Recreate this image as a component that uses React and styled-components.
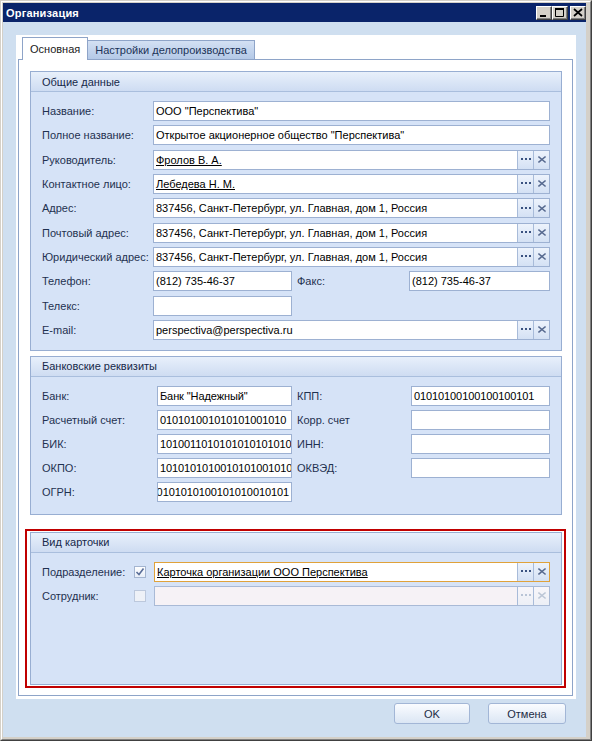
import React from 'react';
import styled, { createGlobalStyle, css } from 'styled-components';

const GlobalStyle = createGlobalStyle`
  html, body { margin: 0; padding: 0; overflow: hidden; background: #d4d0c8; }
  body { font-family: "Liberation Sans", Arial, sans-serif; font-size: 11px; }
  * { box-sizing: border-box; }
`;

const Window = styled.div`
  width: 592px;
  height: 741px;
  border: 1px solid;
  border-color: #d4d0c8 #404040 #404040 #d4d0c8;
  background: #d4d0c8;
`;

const WindowInner = styled.div`
  height: 100%;
  border: 1px solid;
  border-color: #ffffff #808080 #808080 #ffffff;
  padding: 1px 4px 2px 1px;
  display: flex;
  flex-direction: column;
`;

const TitleBar = styled.div`
  height: 19px;
  background: #0a246a;
  display: flex;
  align-items: center;
  padding: 0 0 0 3px;
`;

const Title = styled.div`
  flex: 1;
  color: #ffffff;
  font-weight: bold;
  font-size: 11px;
  letter-spacing: 0.2px;
`;

const TitleButtons = styled.div`
  display: flex;
  align-items: center;
`;

const TitleButton = styled.div`
  width: 16px;
  height: 14px;
  margin-left: ${p => (p.$gap ? '2px' : '0')};
  background: #d4d0c8;
  border: 1px solid;
  border-color: #ffffff #404040 #404040 #ffffff;
  box-shadow: inset -1px -1px 0 #808080;
  display: flex;
  align-items: flex-start;
  justify-content: flex-start;
  svg { display: block; }
`;

const Content = styled.div`
  flex: 1;
  background: #cfdff0;
  padding: 13px 10px 13px 13px;
  display: flex;
  flex-direction: column;
`;

const TabControl = styled.div`
  height: 664px;
  background: #ffffff;
  padding: 2px 3px 3px 2px;
  display: flex;
  flex-direction: column;
`;

const TabStrip = styled.div`
  height: 23px;
  display: flex;
  align-items: flex-end;
  padding-left: 4px;
  margin-bottom: -1px;
  position: relative;
  z-index: 1;
`;

const Tab = styled.div`
  display: flex;
  align-items: center;
  padding: 0 7px;
  border: 1px solid #8ea4c8;
  border-bottom: none;
  white-space: nowrap;
  ${p =>
    p.$active
      ? css`
          height: 23px;
          background: #ffffff;
          color: #1a1a1a;
        `
      : css`
          height: 19px;
          margin-bottom: 1px;
          border-left: none;
          background: linear-gradient(#d3e0f3, #b4c9e7);
          color: #1c3358;
        `}
`;

const Page = styled.div`
  flex: 1;
  border: 1px solid #8ea4c8;
  background: #ffffff;
  padding: 11px 10px 7px 11px;
  display: flex;
  flex-direction: column;
`;

const Group = styled.div`
  border: 1px solid #98aed2;
  background: #d6e3f7;
  display: flex;
  flex-direction: column;
  margin-top: ${p => p.$mt || 0}px;
  ${p => p.$grow && css`flex: 1;`}
`;

const GroupHeader = styled.div`
  height: 20px;
  border-bottom: 1px solid #a9bedd;
  background: linear-gradient(#e8f0fb, #cedcf2);
  padding-left: 11px;
  display: flex;
  align-items: center;
  color: #17294a;
`;

const GroupBody = styled.div`
  display: flex;
  flex-direction: column;
  padding: 9px 11px ${p => p.$pb}px 11px;
  gap: ${p => p.$gap}px;
`;

const Row = styled.div`
  height: 20px;
  display: flex;
  align-items: center;
`;

const Label = styled.div`
  width: ${p => p.$w}px;
  flex: none;
  padding-left: ${p => p.$pl || 0}px;
  color: #1f3150;
  white-space: nowrap;
`;

const Field = styled.div`
  height: 20px;
  display: flex;
  align-items: stretch;
  background: #ffffff;
  border: 1px solid #9db1d2;
  overflow: hidden;
  ${p => (p.$w ? css`width: ${p.$w}px; flex: none;` : css`flex: 1; min-width: 0;`)}
  ${p => p.$focus && css`border-color: #e0a23a;`}
  ${p => p.$disabled && css`background: #f6f2f6; border-color: #a9bad6;`}
`;

const FieldText = styled.div`
  flex: 1;
  min-width: 0;
  display: flex;
  align-items: center;
  justify-content: ${p => (p.$end ? 'flex-end' : 'flex-start')};
  padding: 0 2px;
  overflow: hidden;
  white-space: nowrap;
  color: #000000;
  ${p => p.$link && css`text-decoration: underline;`}
  ${p => p.$digits && css`letter-spacing: -0.1px;`}
`;

const EditButton = styled.div`
  width: 16px;
  flex: none;
  border-left: 1px solid #a8bbd9;
  background: ${p => (p.$disabled ? 'linear-gradient(#f8f6fa, #eceff6)' : 'linear-gradient(#edf3fc, #d4e1f4)')};
  display: flex;
  align-items: center;
  justify-content: center;
  svg { display: block; }
`;

const Check = styled.div`
  width: 12px;
  height: 12px;
  flex: none;
  margin-right: 8px;
  border: 1px solid ${p => (p.$disabled ? '#bcc8dc' : '#a4b5d0')};
  background: ${p => (p.$disabled ? '#eef1f7' : 'linear-gradient(#ffffff, #e8eef8)')};
  display: flex;
  align-items: center;
  justify-content: center;
  svg { display: block; }
`;

const Highlight = styled.div`
  flex: 1;
  margin: 14px -4px 0 -5px;
  border: 2px solid #c00000;
  padding: 1px 2px 1px 3px;
  display: flex;
  flex-direction: column;
`;

const Footer = styled.div`
  height: 21px;
  margin-top: 4px;
  padding-right: 10px;
  display: flex;
  justify-content: flex-end;
  gap: 18px;
`;

const DialogButton = styled.div`
  width: ${p => p.$w}px;
  height: 21px;
  border: 1px solid #a2b6d6;
  border-radius: 3px;
  background: linear-gradient(#fafcff, #dbe6f4);
  color: #1c2b44;
  display: flex;
  align-items: center;
  justify-content: center;
`;

const Dots = ({ disabled }) => (
  <svg width="10" height="3" viewBox="0 0 10 3">
    <g fill={disabled ? '#b9c4d6' : '#3a5280'}>
      <rect x="0" y="0" width="2" height="2" />
      <rect x="4" y="0" width="2" height="2" />
      <rect x="8" y="0" width="2" height="2" />
    </g>
  </svg>
);

const Cross = ({ disabled }) => (
  <svg width="8" height="7" viewBox="0 0 8 7">
    <path d="M1 1 L7 6 M7 1 L1 6" stroke={disabled ? '#bcc6d6' : '#56698f'} strokeWidth="1.5" strokeLinecap="square" fill="none" />
  </svg>
);

const LookupButtons = ({ disabled }) => (
  <>
    <EditButton $disabled={disabled}><Dots disabled={disabled} /></EditButton>
    <EditButton $disabled={disabled}><Cross disabled={disabled} /></EditButton>
  </>
);

const TextRow = ({ label, value, link, lookup }) => (
  <Row>
    <Label $w={111}>{label}</Label>
    <Field>
      <FieldText $link={link}>{value}</FieldText>
      {lookup && <LookupButtons />}
    </Field>
  </Row>
);

const BankRow = ({ label, value, end, label2, value2 }) => (
  <Row>
    <Label $w={115}>{label}</Label>
    <Field $w={135}>
      <FieldText $digits $end={end}>{value}</FieldText>
    </Field>
    {label2 !== undefined && (
      <>
        <Label $w={119} $pl={5}>{label2}</Label>
        <Field>
          <FieldText $digits>{value2}</FieldText>
        </Field>
      </>
    )}
  </Row>
);

export default function App() {
  return (
    <>
      <GlobalStyle />
      <Window>
        <WindowInner>
          <TitleBar>
            <Title>Организация</Title>
            <TitleButtons>
              <TitleButton>
                <svg width="14" height="12" viewBox="0 0 14 12">
                  <rect x="3" y="8" width="6" height="2" fill="#000" />
                </svg>
              </TitleButton>
              <TitleButton>
                <svg width="14" height="12" viewBox="0 0 14 12">
                  <path d="M2.5 1.5 H10.5 V9.5 H2.5 Z" stroke="#000" fill="none" />
                  <rect x="2" y="1" width="9" height="2" fill="#000" />
                </svg>
              </TitleButton>
              <TitleButton $gap>
                <svg width="14" height="12" viewBox="0 0 14 12">
                  <path d="M3 2 L11 9 M11 2 L3 9" stroke="#000" strokeWidth="1.7" fill="none" />
                </svg>
              </TitleButton>
            </TitleButtons>
          </TitleBar>
          <Content>
            <TabControl>
              <TabStrip>
                <Tab $active>Основная</Tab>
                <Tab>Настройки делопроизводства</Tab>
              </TabStrip>
              <Page>
                <Group>
                  <GroupHeader>Общие данные</GroupHeader>
                  <GroupBody $gap={4.33} $pb={10}>
                    <TextRow label="Название:" value={'ООО "Перспектива"'} />
                    <TextRow label="Полное название:" value={'Открытое акционерное общество "Перспектива"'} />
                    <TextRow label="Руководитель:" value="Фролов В. А." link lookup />
                    <TextRow label="Контактное лицо:" value="Лебедева Н. М." link lookup />
                    <TextRow label="Адрес:" value="837456, Санкт-Петербург, ул. Главная, дом 1, Россия" lookup />
                    <TextRow label="Почтовый адрес:" value="837456, Санкт-Петербург, ул. Главная, дом 1, Россия" lookup />
                    <TextRow label="Юридический адрес:" value="837456, Санкт-Петербург, ул. Главная, дом 1, Россия" lookup />
                    <Row>
                      <Label $w={111}>Телефон:</Label>
                      <Field $w={139}><FieldText>(812) 735-46-37</FieldText></Field>
                      <Label $w={117} $pl={5}>Факс:</Label>
                      <Field><FieldText>(812) 735-46-37</FieldText></Field>
                    </Row>
                    <Row>
                      <Label $w={111}>Телекс:</Label>
                      <Field $w={139}><FieldText /></Field>
                    </Row>
                    <TextRow label="E-mail:" value="perspectiva@perspectiva.ru" lookup />
                  </GroupBody>
                </Group>

                <Group $mt={5}>
                  <GroupHeader>Банковские реквизиты</GroupHeader>
                  <GroupBody $gap={4} $pb={12}>
                    <BankRow label="Банк:" value={'Банк "Надежный"'} label2="КПП:" value2="01010100100100100101" />
                    <BankRow label="Расчетный счет:" value="010101001010101001010" label2="Корр. счет" value2="" />
                    <BankRow label="БИК:" value="1010011010101010101010" label2="ИНН:" value2="" />
                    <BankRow label="ОКПО:" value="1010101010010101001010" label2="ОКВЭД:" value2="" />
                    <BankRow label="ОГРН:" value="0101010100101010010101" end />
                  </GroupBody>
                </Group>

                <Highlight>
                  <Group $grow>
                    <GroupHeader>Вид карточки</GroupHeader>
                    <GroupBody $gap={4} $pb={10}>
                      <Row>
                        <Label $w={92}>Подразделение:</Label>
                        <Check>
                          <svg width="10" height="10" viewBox="0 0 10 10">
                            <path d="M1.5 5 L4 7.5 L8.5 1.5" stroke="#5a6e98" strokeWidth="1.6" fill="none" />
                          </svg>
                        </Check>
                        <Field $focus>
                          <FieldText $link>Карточка организации ООО Перспектива</FieldText>
                          <LookupButtons />
                        </Field>
                      </Row>
                      <Row>
                        <Label $w={92}>Сотрудник:</Label>
                        <Check $disabled />
                        <Field $disabled>
                          <FieldText />
                          <LookupButtons disabled />
                        </Field>
                      </Row>
                    </GroupBody>
                  </Group>
                </Highlight>
              </Page>
            </TabControl>
            <Footer>
              <DialogButton $w={76}>OK</DialogButton>
              <DialogButton $w={78}>Отмена</DialogButton>
            </Footer>
          </Content>
        </WindowInner>
      </Window>
    </>
  );
}
